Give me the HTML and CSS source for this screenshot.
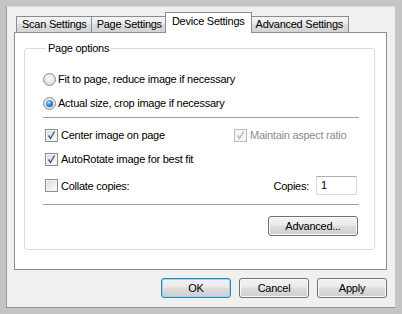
FILE: index.html
```html
<!DOCTYPE html>
<html lang="en">
<head>
    <meta charset="UTF-8">
    <title>Device Settings</title>
    <link rel="stylesheet" href="styles.css">
</head>
<body>
    <div class="dialog">
        <div class="tabs">
            <div class="tab">Scan Settings</div>
            <div class="tab">Page Settings</div>
            <div class="tab active">Device Settings</div>
            <div class="tab">Advanced Settings</div>
        </div>

        <div class="panel">
            <fieldset class="group">
                <legend>Page options</legend>

                <div class="row first">
                    <span class="radio"></span>
                    <span class="label">Fit to page, reduce image if necessary</span>
                </div>
                <div class="row">
                    <span class="radio on"></span>
                    <span class="label">Actual size, crop image if necessary</span>
                </div>

                <div class="sep"></div>

                <div class="row check-row">
                    <div class="check-item wide">
                        <span class="check on">
                            <svg width="11" height="11" viewBox="0 0 11 11"><path d="M2.5 5.5 L4.5 8.5 L8.5 1.5" fill="none" stroke="#3b5a8f" stroke-width="1.4"/></svg>
                        </span>
                        <span class="label">Center image on page</span>
                    </div>
                    <div class="check-item disabled">
                        <span class="check on">
                            <svg width="11" height="11" viewBox="0 0 11 11"><path d="M2.5 5.5 L4.5 8.5 L8.5 1.5" fill="none" stroke="#b4b4b4" stroke-width="1.4"/></svg>
                        </span>
                        <span class="label">Maintain aspect ratio</span>
                    </div>
                </div>
                <div class="row check-row second">
                    <div class="check-item">
                        <span class="check on">
                            <svg width="11" height="11" viewBox="0 0 11 11"><path d="M2.5 5.5 L4.5 8.5 L8.5 1.5" fill="none" stroke="#3b5a8f" stroke-width="1.4"/></svg>
                        </span>
                        <span class="label">AutoRotate image for best fit</span>
                    </div>
                </div>
                <div class="row check-row copies-row">
                    <div class="check-item">
                        <span class="check"></span>
                        <span class="label">Collate copies:</span>
                    </div>
                    <span class="copies-label">Copies:</span>
                    <div class="input">1</div>
                </div>

                <div class="sep sep2"></div>

                <div class="advanced-row">
                    <button class="btn advanced">Advanced...</button>
                </div>
            </fieldset>
        </div>

        <div class="buttons">
            <button class="btn default">OK</button>
            <button class="btn">Cancel</button>
            <button class="btn">Apply</button>
        </div>
    </div>
</body>
</html>
```

FILE: styles.css
```css
body {
    margin: 0;
    background: #c4c4c4;
    font-family: "Liberation Sans", Arial, sans-serif;
    font-size: 11px;
    letter-spacing: -0.25px;
    color: #000;
}

/* Dialog window */
.dialog {
    margin: 6px 7px 6px 6px;
    height: 302px;
    box-sizing: border-box;
    background: #f0f0f0;
    border-left: 1px solid #9d9d9d;
    border-top: 1px solid #d9d9d9;
    border-bottom: 1px solid #8f8f8f;
    padding: 5px 8px 0 7px;
}

/* Tabs */
.tabs {
    display: flex;
    align-items: flex-end;
    height: 20px;
    padding-left: 2px;
    position: relative;
    z-index: 1;
}
.tab {
    height: 15px;
    line-height: 15px;
    padding: 0 5px;
    border: 1px solid #898c95;
    border-bottom: none;
    margin-right: -1px;
    background: linear-gradient(#f3f3f3, #ebebeb 45%, #dedede 50%, #d3d3d3);
    white-space: nowrap;
}
.tab:first-child {
    padding: 0 4px 0 5px;
}
.tab.active {
    height: 20px;
    line-height: 17px;
    margin: 0 -2px -1px -2px;
    padding: 0 6px;
    background: #fff;
    position: relative;
    z-index: 2;
}

/* Tab page */
.panel {
    height: 238px;
    box-sizing: border-box;
    border: 1px solid #898c95;
    background: #fff;
    padding-top: 9px;
}

/* Group box */
.group {
    margin: 0 11px 0 9px;
    padding: 0 15px 13px 18px;
    border: 1px solid #d5dfe5;
    border-radius: 3px;
}
.group legend {
    padding: 0 2px;
    margin-left: 3px;
    line-height: 13px;
}

.row {
    display: flex;
    align-items: center;
    height: 16px;
    margin-top: 8px;
}
.row.first {
    margin-top: 16px;
}
.label {
    white-space: nowrap;
}

/* Radio buttons */
.radio {
    width: 11px;
    height: 11px;
    border-radius: 50%;
    border: 1px solid #8e8f8f;
    background: radial-gradient(circle at 50% 40%, #fdfdfd, #dcdcdc 70%, #c9cbcf);
    margin-right: 2px;
    position: relative;
    flex: none;
}
.radio.on::after {
    content: "";
    position: absolute;
    left: 2px;
    top: 2px;
    width: 7px;
    height: 7px;
    border-radius: 50%;
    background: radial-gradient(circle at 40% 35%, #9ee2ff, #1e7fc8 55%, #0b3b78);
}

/* Separators */
.sep {
    border-top: 1px solid #a0a0a0;
    margin-top: 6px;
}
.sep2 {
    margin-top: 9px;
}

/* Check boxes */
.check-row {
    margin-top: 9px;
}
.check-row.second {
    margin-top: 8px;
}
.check-item {
    display: flex;
    align-items: center;
}
.check-item.wide {
    width: 189px;
}
.check {
    width: 11px;
    height: 11px;
    border: 1px solid #8e8f8f;
    background: linear-gradient(135deg, #dcdcdc, #fbfbfb);
    box-shadow: inset 0 0 0 1px #f4f4f4;
    margin: 0 3px 0 2px;
    display: flex;
    align-items: center;
    justify-content: center;
    flex: none;
}
.check svg {
    display: block;
}
.check-item.disabled .check {
    border-color: #bcbcbc;
    background: #f4f4f4;
}
.check-item.disabled .label {
    color: #8d8d8d;
}

/* Copies */
.copies-row {
    height: 19px;
    margin-top: 9px;
}
.copies-label {
    margin-left: auto;
    margin-right: 7px;
}
.input {
    width: 35px;
    height: 17px;
    line-height: 17px;
    padding-left: 4px;
    border: 1px solid #d5dbe3;
    border-top-color: #abadb3;
    background: #fff;
    margin-right: 2px;
}

/* Buttons */
.btn {
    font-family: "Liberation Sans", Arial, sans-serif;
    font-size: 11px;
    letter-spacing: -0.25px;
    color: #000;
    width: 70px;
    height: 20px;
    padding: 0;
    border: 1px solid #707070;
    border-radius: 3px;
    background: linear-gradient(#f2f2f2, #ebebeb 45%, #dddddd 50%, #cfcfcf);
    box-shadow: inset 0 0 0 1px #fbfbfb;
}
.btn.default {
    border-color: #3c7fb1;
    box-shadow: inset 0 0 0 1px #8fd7f5;
}

.advanced-row {
    display: flex;
    justify-content: flex-end;
    margin-top: 11px;
}
.btn.advanced {
    width: 90px;
    margin-right: 1px;
}

.buttons {
    display: flex;
    justify-content: flex-end;
    gap: 8px;
    margin-top: 8px;
}
```
